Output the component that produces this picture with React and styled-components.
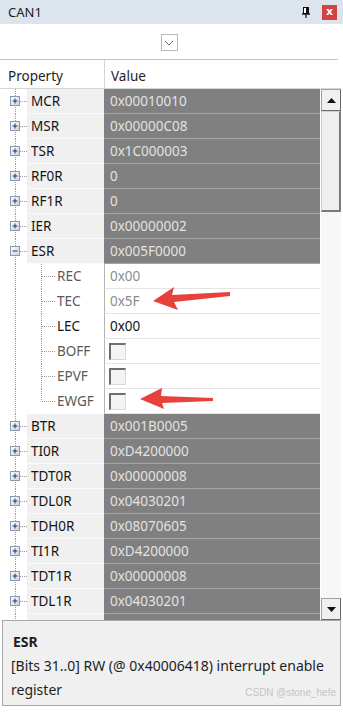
import styled, { createGlobalStyle } from 'styled-components';

const GlobalStyle = createGlobalStyle`
    html, body {
        margin: 0;
        padding: 0;
        background: #ffffff;
    }
    body {
        font-family: "Noto Sans", "Open Sans", sans-serif;
        color: #1e1e1e;
    }
`;

const Window = styled.div`
    position: relative;
    width: 343px;
    height: 712px;
    display: flex;
    flex-direction: column;
    background: #ffffff;
    overflow: hidden;
`;

const TitleBar = styled.div`
    height: 24px;
    display: flex;
    align-items: center;
    padding: 0 6px 0 8px;
    background: #dce4ed;
    font-size: 13px;
    color: #1b1b1b;
`;
const TitleText = styled.span`
    flex: 1;
`;
const CloseButton = styled.div`
    width: 15px;
    height: 15px;
    margin-left: 12px;
    background: #d2443f;
    color: #ffffff;
    font-size: 11px;
    font-weight: 700;
    line-height: 14px;
    text-align: center;
    font-family: "DejaVu Sans", sans-serif;
`;

const Toolbar = styled.div`
    height: 35px;
    display: flex;
    align-items: center;
    justify-content: center;
    border-bottom: 1px solid #c4c4c4;
    margin-right: 5px;
`;
const DropButton = styled.div`
    width: 15px;
    height: 15px;
    margin-top: 2px;
    border: 1px solid #b8b8b8;
    display: flex;
    align-items: center;
    justify-content: center;
`;

const Header = styled.div`
    height: 28px;
    display: grid;
    grid-template-columns: 104px 1fr;
    border-bottom: 1px solid #d6d6d6;
    margin-right: 2px;
    font-size: 13.5px;
`;
const HeaderCell = styled.div`
    display: flex;
    align-items: center;
    padding-top: 3px;
    padding-left: ${p => p.$first ? 8 : 6}px;
    border-left: ${p => p.$first ? 'none' : '1px solid #d6d6d6'};
`;

const Body = styled.div`
    height: 531px;
    display: flex;
    margin-right: 2px;
`;
const List = styled.div`
    flex: 1;
    overflow: hidden;
`;

const Row = styled.div`
    height: 25px;
    display: grid;
    grid-template-columns: 104px 1fr;
    font-size: 13.5px;
`;
const NameSide = styled.div`
    display: flex;
    min-width: 0;
`;
const Gutter = styled.svg`
    flex: none;
    display: block;
`;
const NameLabel = styled.div`
    flex: 1;
    display: flex;
    align-items: center;
    padding-left: ${p => p.$child ? 1 : 4}px;
    background: ${p => p.$child ? '#ffffff' : '#f0f0f0'};
    border-bottom: 1px solid ${p => p.$child ? '#ffffff' : '#fbfbfb'};
    color: ${p => p.$muted ? '#5a5a5a' : '#141414'};
    white-space: nowrap;
`;
const ValueCell = styled.div`
    display: flex;
    align-items: center;
    padding-left: 5px;
    background: ${p => p.$child ? '#ffffff' : '#808080'};
    color: ${p => p.$child ? (p.$muted ? '#8c8c8c' : '#111111') : '#e2e2e2'};
    border-bottom: 1px solid ${p => p.$child ? '#e4e4e4' : '#a6a6a6'};
    border-left: 1px solid ${p => p.$child ? '#b4b4b4' : '#808080'};
    white-space: nowrap;
`;
const CheckBox = styled.div`
    width: 14px;
    height: 14px;
    margin-left: -1px;
    background: #f4f4f4;
    border-top: 2px solid #6e6e6e;
    border-left: 2px solid #6e6e6e;
    border-right: 1px solid #d8d8d8;
    border-bottom: 1px solid #d8d8d8;
`;

const Scrollbar = styled.div`
    width: 20px;
    display: flex;
    flex-direction: column;
    background: #f7f7f7;
    border-left: 1px solid #ffffff;
`;
const ScrollButton = styled.div`
    height: 22px;
    display: flex;
    align-items: center;
    justify-content: center;
    background: #f0f0f0;
    border: 1px solid #a0a0a0;
    border-right-color: #6a6a6a;
    border-bottom-color: #6a6a6a;
    box-sizing: border-box;
`;
const Thumb = styled.div`
    height: 101px;
    background: #efefef;
    border: 1px solid #cfcfcf;
    border-right: 2px solid #7a7a7a;
    border-bottom: 2px solid #7a7a7a;
    box-sizing: border-box;
`;
const Track = styled.div`
    flex: 1;
`;

const Description = styled.div`
    position: relative;
    margin: 0 2px 6px 2px;
    flex: 1;
    border: 1px solid #a8a8a8;
    background: #f0f0f0;
    padding: 9px 10px 0 8px;
    font-size: 14px;
    line-height: 24px;
    color: #1e1e1e;
`;
const DescTitle = styled.div`
    font-weight: 700;
    padding-left: 2px;
`;
const Watermark = styled.div`
    position: absolute;
    right: 4px;
    bottom: 0px;
    font-family: "Liberation Sans", Arial, sans-serif;
    font-size: 10px;
    color: #c4c4c4;
`;

const Overlay = styled.svg`
    position: absolute;
    left: 0;
    top: 0;
    pointer-events: none;
`;

const rows = [
    { name: 'MCR', value: '0x00010010' },
    { name: 'MSR', value: '0x00000C08' },
    { name: 'TSR', value: '0x1C000003' },
    { name: 'RF0R', value: '0' },
    { name: 'RF1R', value: '0' },
    { name: 'IER', value: '0x00000002' },
    { name: 'ESR', value: '0x005F0000', open: true },
    { name: 'REC', value: '0x00', child: true, muted: true },
    { name: 'TEC', value: '0x5F', child: true, muted: true },
    { name: 'LEC', value: '0x00', child: true },
    { name: 'BOFF', check: true, child: true, muted: true },
    { name: 'EPVF', check: true, child: true, muted: true },
    { name: 'EWGF', check: true, child: true, muted: true, last: true },
    { name: 'BTR', value: '0x001B0005' },
    { name: 'TI0R', value: '0xD4200000' },
    { name: 'TDT0R', value: '0x00000008' },
    { name: 'TDL0R', value: '0x04030201' },
    { name: 'TDH0R', value: '0x08070605' },
    { name: 'TI1R', value: '0xD4200000' },
    { name: 'TDT1R', value: '0x00000008' },
    { name: 'TDL1R', value: '0x04030201' },
    // next row only peeks out under the list edge
    { name: '', value: '' },
];

const dots = { stroke: '#9a9a9a', strokeWidth: 1, strokeDasharray: '1 1', fill: 'none' };

function TreeGutter({ row }) {
    if (row.child) {
        return (
            <Gutter width="56" height="25" viewBox="0 0 56 25">
                <line x1="15.5" y1="0" x2="15.5" y2="25" {...dots} />
                <line x1="41.5" y1="0" x2="41.5" y2={row.last ? 12.5 : 25} {...dots} />
                <line x1="42" y1="12.5" x2="56" y2="12.5" {...dots} />
            </Gutter>
        );
    }
    return (
        <Gutter width="27" height="25" viewBox="0 0 27 25">
            <defs>
                <linearGradient id="boxfill" x1="0" y1="0" x2="1" y2="1">
                    <stop offset="0" stopColor="#ffffff" />
                    <stop offset="1" stopColor="#c9d3e0" />
                </linearGradient>
            </defs>
            <line x1="15.5" y1="0" x2="15.5" y2="25" {...dots} />
            <line x1="20" y1="12.5" x2="27" y2="12.5" {...dots} />
            {row.open && <line x1="41.5" y1="13" x2="41.5" y2="25" {...dots} />}
            <rect x="10.5" y="7.5" width="9" height="9" fill="url(#boxfill)" stroke="#8a99ad" />
            <line x1="12.5" y1="12" x2="17.5" y2="12" stroke="#1d3570" strokeWidth="1" />
            {!row.open && <line x1="15" y1="9.5" x2="15" y2="14.5" stroke="#1d3570" strokeWidth="1" />}
        </Gutter>
    );
}

function PropertyRow({ row }) {
    return (
        <Row>
            <NameSide>
                <TreeGutter row={row} />
                <NameLabel $child={row.child} $muted={row.muted}>{row.name}</NameLabel>
            </NameSide>
            <ValueCell $child={row.child} $muted={row.muted}>
                {row.check ? <CheckBox /> : row.value}
            </ValueCell>
        </Row>
    );
}

function App() {
    return (
        <Window>
            <GlobalStyle />
            <TitleBar>
                <TitleText>CAN1</TitleText>
                <svg width="8" height="11" viewBox="0 0 8 11">
                    <rect x="1.5" y="0.5" width="5" height="6" fill="#ffffff" stroke="#111" />
                    <rect x="4" y="1" width="2" height="5" fill="#111" />
                    <line x1="0" y1="7" x2="8" y2="7" stroke="#111" strokeWidth="1.4" />
                    <line x1="4" y1="7" x2="4" y2="11" stroke="#111" strokeWidth="1.2" />
                </svg>
                <CloseButton>x</CloseButton>
            </TitleBar>
            <Toolbar>
                <DropButton>
                    <svg width="10" height="6" viewBox="0 0 10 6">
                        <polyline points="1,1 5,5 9,1" fill="none" stroke="#707070" strokeWidth="1" />
                    </svg>
                </DropButton>
            </Toolbar>
            <Header>
                <HeaderCell $first>Property</HeaderCell>
                <HeaderCell>Value</HeaderCell>
            </Header>
            <Body>
                <List>
                    {rows.map((row, index) => (
                        <PropertyRow key={index} row={row} />
                    ))}
                </List>
                <Scrollbar>
                    <ScrollButton>
                        <svg width="9" height="5" viewBox="0 0 9 5"><polygon points="0,5 4.5,0 9,5" fill="#111" /></svg>
                    </ScrollButton>
                    <Thumb />
                    <Track />
                    <ScrollButton>
                        <svg width="9" height="5" viewBox="0 0 9 5"><polygon points="0,0 4.5,5 9,0" fill="#111" /></svg>
                    </ScrollButton>
                </Scrollbar>
            </Body>
            <Description>
                <DescTitle>ESR</DescTitle>
                <div>[Bits 31..0] RW (@ 0x40006418) interrupt enable<br />register</div>
                <Watermark>CSDN @stone_hefe</Watermark>
            </Description>
            <Overlay width="343" height="712" viewBox="0 0 343 712">
                <polygon points="153,301 174,287 172,295 230,292 230,296 174,302 178,310" fill="#e8413b" />
                <polygon points="140,399 162,388 161,396 213,398 213,401 162,403 164,409" fill="#e8413b" />
            </Overlay>
        </Window>
    );
}

export default App;
